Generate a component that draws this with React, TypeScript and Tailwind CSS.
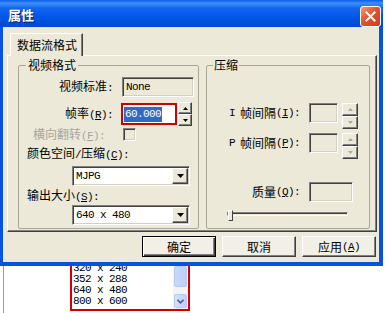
import React from "react";

const sunken =
  "border border-t-[#808080] border-l-[#808080] border-r-white border-b-white shadow-[inset_1px_1px_0_#404040,inset_-1px_-1px_0_#D4D0C8]";
const raised =
  "border border-t-white border-l-white border-r-[#404040] border-b-[#404040] shadow-[inset_-1px_-1px_0_#808080]";
const mono = "font-['Liberation_Mono',monospace] text-[11px] tracking-[-0.6px]";

function M({ children }: { children: React.ReactNode }) {
  return <span className="font-['Liberation_Mono',monospace] text-[11px] tracking-[-0.6px]">{children}</span>;
}

function TriDown({ color = "#000", w = 7, h = 4 }: { color?: string; w?: number; h?: number }) {
  return (
    <svg width={w} height={h} viewBox={`0 0 ${w} ${h}`}>
      <path d={`M0 0H${w}L${w / 2} ${h}Z`} fill={color} />
    </svg>
  );
}
function TriUp({ color = "#000", w = 7, h = 4 }: { color?: string; w?: number; h?: number }) {
  return (
    <svg width={w} height={h} viewBox={`0 0 ${w} ${h}`}>
      <path d={`M0 ${h}H${w}L${w / 2} 0Z`} fill={color} />
    </svg>
  );
}

function Spin({ size, disabled }: { size: string; disabled?: boolean }) {
  const c = disabled ? "#ACA899" : "#000";
  return (
    <div className={`flex flex-col shrink-0 ${size}`}>
      <div className={`flex-1 bg-[#ECE9D8] ${raised} flex items-center justify-center`}>
        <TriUp color={c} w={5} h={3} />
      </div>
      <div className={`flex-1 bg-[#ECE9D8] ${raised} flex items-center justify-center`}>
        <TriDown color={c} w={5} h={3} />
      </div>
    </div>
  );
}

function Combo({ value }: { value: string }) {
  return (
    <div className={`w-[118px] h-[20px] ml-[53px] bg-white ${sunken} flex items-center pr-[1px]`}>
      <span className={`flex-1 pl-[3px] ${mono}`}>{value}</span>
      <div className={`w-[16px] h-[16px] bg-[#ECE9D8] ${raised} flex items-center justify-center`}>
        <TriDown />
      </div>
    </div>
  );
}

function Btn({ children, def }: { children: React.ReactNode; def?: boolean }) {
  return (
    <div
      className={`w-[74px] h-[21px] flex items-center justify-center bg-[#F1EFE6] ${
        def
          ? "border border-black shadow-[inset_1px_1px_0_white,inset_-1px_-1px_0_#404040,inset_-2px_-2px_0_#808080]"
          : raised
      }`}
    >
      {children}
    </div>
  );
}

export default function App() {
  return (
    <div className="w-[386px] h-[313px] bg-white overflow-hidden flex flex-col text-[12px] leading-[12px] text-black font-['Noto_Sans_CJK_SC','Noto_Sans',sans-serif]">
      {/* window */}
      <div className="w-[383px] h-[266px] shrink-0 flex flex-col bg-[#0852E0]">
        {/* title bar */}
        <div className="h-[27px] shrink-0 flex items-start bg-[linear-gradient(180deg,#0A5CE8_0%,#3D8FFB_12%,#1266F0_30%,#0055E5_65%,#0048D4_100%)]">
          <span className="ml-[8px] mt-[8px] text-[13px] leading-[13px] font-bold text-white [text-shadow:1px_1px_0_#0A246A]">
            属性
          </span>
          <div className="ml-auto mr-[2px] mt-[6px] w-[21px] h-[21px] rounded-[3px] border border-white bg-[linear-gradient(135deg,#F29A7C_0%,#E0542F_45%,#C7401D_100%)] flex items-center justify-center">
            <svg width="11" height="11" viewBox="0 0 11 11">
              <path d="M1.5 1.5L9.5 9.5M9.5 1.5L1.5 9.5" stroke="#fff" strokeWidth="2" strokeLinecap="square" />
            </svg>
          </div>
        </div>

        {/* body */}
        <div className="flex-1 ml-[3px] mr-[4px] mb-[4px] bg-[#ECE9D8] flex flex-col pt-[6px]">
          {/* tab strip */}
          <div className="h-[22px] flex pl-[7px]">
            <div className="relative z-10 w-[73px] h-[23px] bg-[#ECE9D8] border-t border-l border-r border-t-white border-l-white border-r-[#404040] shadow-[inset_-1px_0_0_#808080] flex items-center pl-[6px] pb-[1px]">
              数据流格式
            </div>
          </div>

          {/* panel */}
          <div className="ml-[4px] w-[370px] h-[177px] border border-t-white border-l-white border-r-[#404040] border-b-[#404040] shadow-[inset_-1px_-1px_0_#808080] flex gap-[7px] pl-[10px] pt-[3px]">
            {/* left group */}
            <fieldset className="w-[181px] h-[170px] border border-[#A9A696] m-0 p-0 min-w-0 rounded-[2px]">
              <legend className="ml-[7px] px-[2px] leading-[12px]">视频格式</legend>
              <div className="flex flex-col">
                <div className="mt-[6px] h-[20px] flex items-center">
                  <span className="w-[94px] text-right">
                    视频标准<M>:</M>
                  </span>
                  <div className={`ml-[9px] w-[72px] h-[20px] bg-[#ECE9D8] ${sunken} flex items-center pl-[3px] ${mono}`}>
                    None
                  </div>
                </div>
                <div className="mt-[5px] h-[24px] flex items-center">
                  <span className="w-[94px] text-right">
                    帧率
                    <M>
                      (<u>R</u>):
                    </M>
                  </span>
                  <div className="ml-[8px] w-[56px] h-[22px] border-2 border-[#D00000] bg-white flex items-center pl-[1px]">
                    <span className={`bg-[#316AC5] text-white leading-[15px] px-[1px] ${mono}`}>60.000</span>
                  </div>
                  <Spin size="w-[14px] h-[24px] ml-[1px]" />
                </div>
                <div className="mt-[2px] h-[13px] flex items-center">
                  <span className="ml-[14px] w-[90px] text-[#A8A698]">
                    横向翻转
                    <M>
                      (<u>F</u>):
                    </M>
                  </span>
                  <div className={`w-[13px] h-[13px] bg-[#ECE9D8] ${sunken}`} />
                </div>
                <div className="mt-[6px] h-[13px] flex items-center">
                  <span className="ml-[8px]">
                    颜色空间<M>/</M>压缩
                    <M>
                      (<u>C</u>):
                    </M>
                  </span>
                </div>
                <div className="mt-[6px] flex">
                  <Combo value="MJPG" />
                </div>
                <div className="mt-[3px] h-[13px] flex items-center">
                  <span className="ml-[8px]">
                    输出大小
                    <M>
                      (<u>S</u>):
                    </M>
                  </span>
                </div>
                <div className="mt-[3px] flex">
                  <Combo value="640 x 480" />
                </div>
              </div>
            </fieldset>

            {/* right group */}
            <fieldset className="w-[164px] h-[170px] border border-[#A9A696] m-0 p-0 min-w-0 rounded-[2px]">
              <legend className="ml-[6px] px-[1px] leading-[12px]">压缩</legend>
              <div className="flex flex-col">
                <div className="mt-[32px] flex items-start">
                  <span className="w-[93px] h-[20px] flex items-center justify-end">
                    <M>I</M>
                    <span className="ml-[5px]">帧间隔</span>
                    <M>
                      (<u>I</u>):
                    </M>
                  </span>
                  <div className={`ml-[9px] w-[29px] h-[20px] bg-[#ECE9D8] ${sunken}`} />
                  <Spin size="w-[16px] h-[26px] ml-[4px]" disabled />
                </div>
                <div className="mt-[4px] flex items-start">
                  <span className="w-[93px] h-[20px] flex items-center justify-end">
                    <M>P</M>
                    <span className="ml-[5px]">帧间隔</span>
                    <M>
                      (<u>P</u>):
                    </M>
                  </span>
                  <div className={`ml-[9px] w-[29px] h-[20px] bg-[#ECE9D8] ${sunken}`} />
                  <Spin size="w-[16px] h-[26px] ml-[4px]" disabled />
                </div>
                <div className="mt-[23px] flex items-center">
                  <span className="w-[93px] h-[20px] flex items-center justify-end">
                    质量
                    <M>
                      (<u>Q</u>):
                    </M>
                  </span>
                  <div className={`ml-[9px] w-[44px] h-[20px] bg-[#ECE9D8] ${sunken}`} />
                </div>
                <div className="mt-[8px] ml-[20px] w-[121px] h-[12px] relative">
                  <div className="mt-[2px] h-[4px] border border-t-[#808080] border-l-[#808080] border-r-white border-b-white shadow-[inset_1px_1px_0_#404040]" />
                  <div className="absolute left-[1px] top-0 w-[5px] h-[11px] bg-[#ECE9D8] border border-t-white border-l-white border-r-[#404040] border-b-[#404040]" />
                </div>
              </div>
            </fieldset>
          </div>

          {/* buttons */}
          <div className="mt-[4px] flex justify-end gap-[6px] pr-[3px]">
            <Btn def>确定</Btn>
            <Btn>取消</Btn>
            <Btn>
              应用
              <M>
                (<u>A</u>)
              </M>
            </Btn>
          </div>
        </div>
      </div>

      {/* below the window */}
      <div className="flex-1 flex">
        <div className="ml-[3px] w-[1px] bg-[#9C9C9C]" />
        <div className="ml-[66px] w-[120px] h-[45px] border-x-2 border-b-2 border-[#D40000] bg-white flex overflow-hidden">
          <div className="flex-1 flex flex-col -mt-[3px] pl-[1px] font-['Liberation_Mono',monospace] text-[11px] tracking-[-0.6px]">
            <div className="h-[11px] leading-[11px]">320 x 240</div>
            <div className="h-[11px] leading-[11px]">352 x 288</div>
            <div className="h-[11px] leading-[11px]">640 x 480</div>
            <div className="h-[11px] leading-[11px]">800 x 600</div>
          </div>
          <div className="w-[15px] flex flex-col bg-[#F4F3EE]">
            <div className="h-[21px] mx-[1px] rounded-[2px] border border-[#B6C9F4] bg-[linear-gradient(90deg,#C9D8FC,#BCCFFB)]" />
            <div className="flex-1" />
            <div className="h-[14px] mx-[1px] mb-[1px] rounded-[2px] border border-[#B6C9F4] bg-[linear-gradient(90deg,#D5E1FD,#BCCFFB)] flex items-center justify-center">
              <svg width="7" height="5" viewBox="0 0 7 5">
                <path d="M0.5 0.8L3.5 3.8L6.5 0.8" stroke="#4D6185" strokeWidth="1.6" fill="none" />
              </svg>
            </div>
          </div>
        </div>
      </div>
    </div>
  );
}
